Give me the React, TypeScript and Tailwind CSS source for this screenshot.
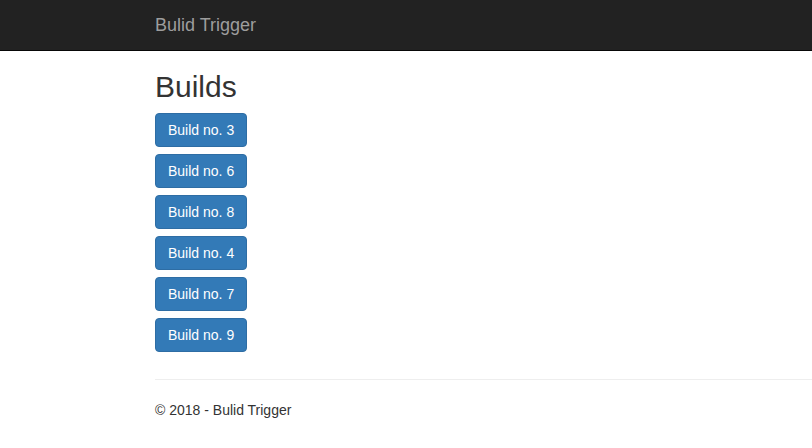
const builds = [3, 6, 8, 4, 7, 9];

export default function App() {
  return (
    <div className="min-h-[448px] bg-white font-['Liberation_Sans',Arial,sans-serif] text-[14px] leading-[20px] text-[#333]">
      <nav className="h-[51px] bg-[#222] border-b border-[#080808]">
        <div className="pl-[155px]">
          <a href="#" className="block py-[15px] text-[18px] leading-[20px] text-[#9d9d9d]">
            Bulid Trigger
          </a>
        </div>
      </nav>

      <div className="pl-[155px]">
        <h2 className="mt-[19px] mb-[10px] text-[30px] leading-[33px] font-normal">Builds</h2>

        <div className="flex flex-col items-start gap-[7px]">
          {builds.map((n) => (
            <button
              key={n}
              type="button"
              className="h-[34px] px-[12px] rounded-[4px] border border-[#2e6da4] bg-[#337ab7] text-white text-[14px] leading-[20px]"
            >
              Build no. {n}
            </button>
          ))}
        </div>

        <hr className="mt-[27px] mb-[20px] border-0 border-t border-[#eee]" />

        <footer>
          <p>© 2018 - Bulid Trigger</p>
        </footer>
      </div>
    </div>
  );
}
